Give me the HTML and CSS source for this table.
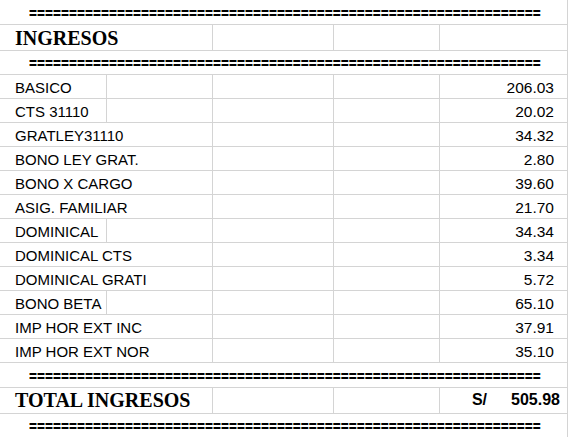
FILE: index.html
```html
<!DOCTYPE html>
<html lang="es">
<head>
<meta charset="utf-8">
<title>Ingresos</title>
<link rel="stylesheet" href="styles.css">
</head>
<body>
<div class="sheet">
  <div class="c span5 sep"><span class="eq">================================================================</span></div>

  <div class="c span2 head">INGRESOS</div>
  <div class="c"></div><div class="c"></div><div class="c"></div>

  <div class="c span5 sep"><span class="eq">================================================================</span></div>

  <div class="c lbl">BASICO</div><div class="c"></div>
  <div class="c"></div><div class="c"></div><div class="c num">206.03</div>

  <div class="c lbl">CTS 31110</div><div class="c"></div>
  <div class="c"></div><div class="c"></div><div class="c num">20.02</div>

  <div class="c span2 lbl">GRATLEY31110</div>
  <div class="c"></div><div class="c"></div><div class="c num">34.32</div>

  <div class="c span2 lbl">BONO LEY GRAT.</div>
  <div class="c"></div><div class="c"></div><div class="c num">2.80</div>

  <div class="c span2 lbl">BONO X CARGO</div>
  <div class="c"></div><div class="c"></div><div class="c num">39.60</div>

  <div class="c span2 lbl">ASIG. FAMILIAR</div>
  <div class="c"></div><div class="c"></div><div class="c num">21.70</div>

  <div class="c lbl">DOMINICAL</div><div class="c"></div>
  <div class="c"></div><div class="c"></div><div class="c num">34.34</div>

  <div class="c span2 lbl">DOMINICAL CTS</div>
  <div class="c"></div><div class="c"></div><div class="c num">3.34</div>

  <div class="c span2 lbl">DOMINICAL GRATI</div>
  <div class="c"></div><div class="c"></div><div class="c num">5.72</div>

  <div class="c lbl">BONO BETA</div><div class="c"></div>
  <div class="c"></div><div class="c"></div><div class="c num">65.10</div>

  <div class="c span2 lbl">IMP HOR EXT INC</div>
  <div class="c"></div><div class="c"></div><div class="c num">37.91</div>

  <div class="c span2 lbl">IMP HOR EXT NOR</div>
  <div class="c"></div><div class="c"></div><div class="c num">35.10</div>

  <div class="c span5 sep"><span class="eq">================================================================</span></div>

  <div class="c span2 head total">TOTAL INGRESOS</div>
  <div class="c"></div><div class="c"></div>
  <div class="c tot"><span class="cur">S/</span><span class="amt">505.98</span></div>

  <div class="c span5 sep"><span class="eq">================================================================</span></div>
</div>
</body>
</html>
```

FILE: styles.css
```css
html, body {
  margin: 0;
  padding: 0;
  background: #ffffff;
}

.sheet {
  display: grid;
  grid-template-columns: 107px 106px 121px 106px 128px;
  grid-template-rows: 25px 26px 24px repeat(12, 24px) 25px 26px 24px;
  width: 568px;
  color: #000;
  font-family: "Liberation Sans", Arial, sans-serif;
  font-size: 15px;
}

.c {
  box-sizing: border-box;
  border-right: 1px solid #d4d4d4;
  border-bottom: 1px solid #d4d4d4;
  display: flex;
  align-items: flex-end;
  white-space: nowrap;
  overflow: visible;
  min-width: 0;
}

.span2 { grid-column: span 2; }
.span5 { grid-column: span 5; }

.lbl {
  padding: 0 0 2px 15px;
  line-height: 17px;
}

.num {
  justify-content: flex-end;
  padding: 0 13px 2px 0;
  line-height: 17px;
  font-size: 15.5px;
}

.head {
  font-family: "Liberation Serif", "Times New Roman", serif;
  font-weight: bold;
  font-size: 20px;
  line-height: 22px;
  padding: 0 0 1px 15px;
}

.total {
  padding-bottom: 2px;
}

.sep {
  font-family: "DejaVu Sans Mono", "Liberation Mono", monospace;
  font-weight: bold;
  font-size: 13.29px;
  line-height: 16px;
  padding: 0 0 2px 29px;
}

.eq {
  display: inline-block;
  transform: scaleY(1.35);
  transform-origin: 50% 60%;
}

.tot {
  justify-content: flex-end;
  padding: 0 7px 4px 0;
  font-weight: bold;
  font-size: 16px;
  line-height: 18px;
}

.cur {
  margin-right: 24px;
}
```
